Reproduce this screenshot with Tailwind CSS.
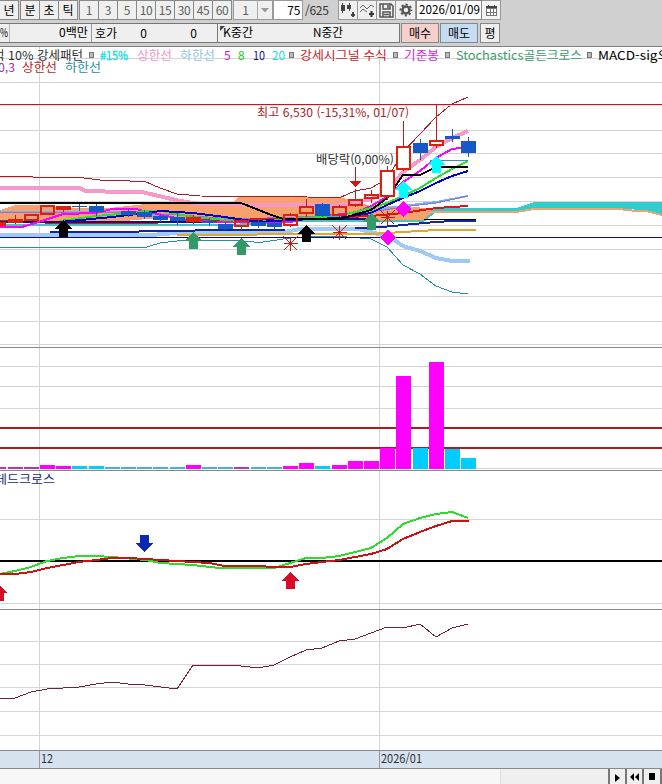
<!DOCTYPE html>
<html lang="ko">
    <head>
        <meta charset="utf-8">
        <title>Chart</title>
        <meta name="viewport" content="width=device-width, initial-scale=1">
        <script src="https://cdn.jsdelivr.net/npm/@tailwindcss/browser@4"></script>
    </head>
    <body class="w-[662px] h-[784px] overflow-hidden flex flex-col bg-white text-black text-[12px] leading-none font-['Noto_Sans_CJK_KR',sans-serif]">

        <header class="h-[47px] shrink-0 bg-[#d0d0d0] border-b border-[#808080] whitespace-nowrap">
            <!-- period bar -->
            <div class="flex h-5 text-[#606060]">
                <div class="flex text-black">
                    <div class="w-[19px] h-5 bg-[#efefef] border border-l-0 border-[#888] flex items-center justify-center">년</div>
                    <div class="ml-px w-5 h-5 bg-[#efefef] border border-[#888] flex items-center justify-center">분</div>
                    <div class="w-[19px] h-5 bg-[#efefef] border border-l-0 border-[#888] flex items-center justify-center">초</div>
                    <div class="w-[19px] h-5 bg-[#efefef] border border-l-0 border-[#888] flex items-center justify-center">틱</div>
                </div>
                <div class="flex ml-px tracking-tight">
                    <div class="w-5 h-5 bg-[#efefef] border border-[#888] flex items-center justify-center">1</div>
                    <div class="w-[19px] h-5 bg-[#efefef] border border-l-0 border-[#888] flex items-center justify-center">3</div>
                    <div class="w-[19px] h-5 bg-[#efefef] border border-l-0 border-[#888] flex items-center justify-center">5</div>
                    <div class="w-[19px] h-5 bg-[#efefef] border border-l-0 border-[#888] flex items-center justify-center">10</div>
                    <div class="w-[19px] h-5 bg-[#efefef] border border-l-0 border-[#888] flex items-center justify-center">15</div>
                    <div class="w-[19px] h-5 bg-[#efefef] border border-l-0 border-[#888] flex items-center justify-center">30</div>
                    <div class="w-[19px] h-5 bg-[#efefef] border border-l-0 border-[#888] flex items-center justify-center">45</div>
                    <div class="w-[19px] h-5 bg-[#efefef] border border-l-0 border-[#888] flex items-center justify-center">60</div>
                </div>
                <div class="flex ml-px w-10 h-5 bg-[#efefef] border border-[#999]">
                    <div class="w-6 border-r border-[#aaa] flex items-center justify-center">1</div>
                    <div class="flex-1 flex items-center justify-center">
                        <svg width="8" height="5" viewBox="0 0 8 5"><path d="M0 0h8L4 4.5z" fill="#999"/></svg>
                    </div>
                </div>
                <div class="w-[30px] h-5 bg-white border border-[#999] flex items-center justify-end pr-0.5 text-black tracking-tight">75</div>
                <div class="w-[35px] flex items-center pl-0.5 text-[#333] tracking-tight">/625</div>
                <div class="flex">
                    <div class="w-5 h-5 bg-[#efefef] border border-[#999] flex items-center justify-center">
                        <svg width="16" height="16" viewBox="0 0 16 16" shape-rendering="crispEdges" fill="#444"><path d="M1 3h4v6H1zM2 1h1v10H2zM7 3h4v4H7zM9 1h1v8H9zM12 10h2v5h-2zM11 12h4v2h-4z"/></svg>
                    </div>
                    <div class="w-[19px] h-5 bg-[#efefef] border border-l-0 border-[#999] flex items-center justify-center">
                        <svg width="16" height="16" viewBox="0 0 16 16" fill="none" stroke="#666"><path d="M1 6l3-3 4 4 4-4 3 2M1 10l3-3 4 3"/><path d="M12.500 9v6M10 12h5" stroke="#333" stroke-width="2"/></svg>
                    </div>
                    <div class="w-[19px] h-5 bg-[#efefef] border border-l-0 border-[#999] flex items-center justify-center">
                        <svg width="15" height="15" viewBox="0 0 15 15" fill="none" stroke="#555" stroke-width="1.500"><path d="M1 1h11l2 2v11H1zM4 1v5h7V1M4 14V9h7v5M5 11.500h5M9 2v3"/></svg>
                    </div>
                    <div class="w-5 h-5 bg-[#efefef] border border-l-0 border-[#999] flex items-center justify-center">
                        <svg width="14" height="14" viewBox="-7 -7 14 14" fill="none" stroke="#555"><circle r="3.500" stroke-width="2.500"/><circle r="5.400" stroke-width="2" stroke-dasharray="2.200 2.040" stroke-dashoffset="1.100"/></svg>
                    </div>
                </div>
                <div class="w-[66px] h-5 bg-white border border-[#888] flex items-center text-black">
                    <svg width="64" height="18"><text x="2" y="13" textLength="61" lengthAdjust="spacingAndGlyphs">2026/01/09</text></svg>
                </div>
                <div class="w-[19px] h-5 bg-[#f4f4f4] border border-l-0 border-[#999] flex items-center justify-center">
                    <svg width="11" height="11" viewBox="0 0 11 11" shape-rendering="crispEdges"><path d="M0 1h11v10H0z" fill="#777"/><path d="M0 1h11v2H0zM2 0h1v2H2zM8 0h1v2H8z" fill="#444"/><path d="M1 4h3v3H1zM5 4h2v3H5zM8 4h2v3H8zM1 8h3v2H1zM5 8h2v2H5zM8 8h2v2H8z" fill="#fff"/></svg>
                </div>
            </div>

            <!-- quote bar -->
            <div class="flex h-5 mt-[3px]">
                <div class="w-[217px] h-5 bg-[#efefef] border-y border-[#777] flex items-center">
                    <div class="w-[10px] h-full border-r border-[#bbb] flex items-center"><svg width="9" height="18"><text x="0" y="13" textLength="8" lengthAdjust="spacingAndGlyphs">%</text></svg></div>
                    <div class="w-[82px] h-full border-r border-[#999] flex items-center justify-end pr-0.5"><svg width="31" height="18"><text x="1" y="13" textLength="29" lengthAdjust="spacingAndGlyphs">0백만</text></svg></div>
                    <div class="w-7 pl-[3px]">호가</div>
                    <div class="w-[27px] text-right">0</div>
                    <div class="w-[50px] text-right">0</div>
                </div>
                <div class="w-[183px] h-5 bg-[#efefef] border border-[#777] flex items-center relative">
                    <svg class="absolute left-0.5 top-0.5" width="5" height="5"><path d="M0 0h5L0 5z" fill="#444"/></svg>
                    <svg width="180" height="18"><text x="5" y="13" textLength="30" lengthAdjust="spacingAndGlyphs">K중간</text><text x="95" y="13" textLength="30" lengthAdjust="spacingAndGlyphs">N중간</text></svg>
                </div>
                <div class="ml-px w-[38px] h-5 bg-[#f4cfcb] border border-[#888] flex items-center justify-center">매수</div>
                <div class="ml-px w-[38px] h-5 bg-[#c5dcf3] border border-[#888] flex items-center justify-center">매도</div>
                <div class="ml-0.5 w-5 h-5 bg-[#efefef] border border-[#888] flex items-center justify-center">평</div>
            </div>
        </header>

        <!-- chart, y runs from 47 to 750 -->
        <svg class="block shrink-0" width="662" height="703" viewBox="0 47 662 703" shape-rendering="crispEdges" fill="none">
            <g id="grid" stroke="#d4d4d4"></g>
            <path d="M0 347.500H662M0 470.500H662M0 609.500H662" stroke="#888"/>

            <!-- cloud -->
            <path d="M0 210L15 205H42L60 208H110L145 204L160 203H232L238 197H340L371 206H400L440 209H470V212H435L424 220H300L240 219L160 218L100 223H0z" fill="#f8a16c"/>
            <path d="M0 224.500H240L300 220.500H424L436 210.500H470" stroke="#4cc0bd" stroke-width="2"/>
            <path d="M436 208H516L535 202H662V215L646 211L630 209H560L540 208L516 211H430z" fill="#33cccc"/>
            <path d="M428 212H516L534 209H552L566 208.500H614L632 210.500L646 211L662 215" stroke="#e8a676" stroke-width="2"/>

            <!-- bands -->
            <path d="M0 188H80L85 191L144 192.500L180 201L200 204L280 205H340L371 199L387 192L403 172L420 160L436 147L452 138L468 131" stroke="#f799c8" stroke-width="4"/>
            <path d="M0 235H150L177 233H280L300 229H358L371 232L390 237L403 246L420 251L436 258L452 261H470" stroke="#a0caf5" stroke-width="4"/>
            <path d="M0 176.500H25L50 178L80 177.500L100 180L145 181.500L160 188L177 194L200 196L307 197L340 197.500L355 191L371 188L387 179L403 152L420 134L436 117L452 104L468 97" stroke="#a91c22"/>
            <path d="M0 247.500H88L104 247.500L145 247.500L160 243L177 241L209 240L241 241L260 242.500L290 238L330 236L355 237.500L371 239L387 247L403 265L420 274L436 286L452 292L468 294" stroke="#27919b"/>
            <path d="M0 237.500H662" stroke="#0a0a78"/>
            <path d="M177 235H225L290 234H339L371 234L403 232L436 230H476" stroke="#e0a828" stroke-width="2"/>
            <path d="M50 232H128L150 231H180L210 230H285M355 228H371L403 225L436 222L452 221H476" stroke="#12279a" stroke-width="2"/>
            <path d="M424 219.500H476" stroke="#000"/>

            <!-- moving averages -->
            <path d="M0 211.500H130L180 219L240 222L290 221L340 214L371 211L403 206L436 202L468 196" stroke="#6ab8ee" stroke-width="2"/>
            <path d="M0 212.500H60L145 213L240 219L322 216L371 212L403 207L436 203L468 196" stroke="#a06adf"/>
            <path d="M0 221L60 223H150L200 220L300 219L371 216L403 213L436 208L468 206" stroke="#d81818" stroke-width="2"/>
            <path d="M0 222H240L290 219H371" stroke="#12127c" stroke-width="2"/>
            <path d="M0 227H22L42 221L63 214L96 213L112 209H136L161 215L193 221L225 222L241 222L290 222L322 216L355 213L371 206L387 197L403 182L420 171L436 158L452 149L468 147" stroke="#f0f" stroke-width="2"/>
            <path d="M60 221L96 216L120 214L145 211H161L193 217L225 220L258 222L290 219L339 216L371 208L387 203L403 196L420 188L436 178L452 169L468 161" stroke="#2be02b" stroke-width="2"/>
            <path d="M60 222L112 217L145 213L161 211L193 213L225 217L258 222L290 220L339 218L371 213L387 205L403 198L420 191L436 183L452 176L468 171" stroke="#0000c8" stroke-width="2"/>
            <path d="M0 203H241L274 216L284 219H340L371 210L387 198L403 175H420L436 167H468" stroke="#000" stroke-width="2"/>
            <path d="M430 160.500H468" stroke="#2c9c9c"/>

            <!-- high price -->
            <path d="M0 104.500H662" stroke="#b11f24"/>
            <path d="M0 105.500H662" stroke="#fad0d0"/>

            <g id="candles"></g>

            <!-- signals -->
            <g id="signals"></g>
            <path d="M355.500 167V182" stroke="#c01818"/>
            <path d="M350 181H361L355.500 187z" fill="#e01010"/>

            <!-- volume -->
            <path d="M0 428H662M0 448H662" stroke="#b5191c" stroke-width="2"/>
            <g id="volume"></g>

            <!-- MACD -->
            <path d="M0 561H662" stroke="#000" stroke-width="2"/>
            <path d="M0 574L15 571L31 567L47 561L63 558L79 556H96L112 557L145 560L161 563L193 565L219 568H274L290 563L306 558H322L339 556L371 548L387 538L403 524L420 518L436 514L452 512L468 518" stroke="#2bdc2b" stroke-width="2"/>
            <path d="M0 574H15L31 572L47 568L63 565L79 562L96 560L112 558H128L145 559L177 561L209 563L225 566H258L274 567H290L306 564L322 562L339 560L371 554L387 549L403 539L420 532L436 526L452 521H469" stroke="#d01010" stroke-width="2"/>
            <path d="M140 535H149V543H153L144.500 552L136 543H140z" fill="#0a28b0"/>

            <path d="M0 699L15 698L31 692L47 689L79 687L96 684L112 682L128 684L145 685L177 689L193 665L209 666L225 665L241 666L258 668L274 665L290 657L306 650L322 648L339 641L355 639L371 633L387 627L403 628L420 624L436 637L452 628L468 624" stroke="#6f2337"/>

            <!-- labels -->
            <g font-size="12" fill="#303030" shape-rendering="auto">
                <text x="-7" y="60" textLength="90" lengthAdjust="spacingAndGlyphs">벅 10% 강세패턴</text>
                <text x="100" y="60" textLength="28" lengthAdjust="spacingAndGlyphs" fill="#18dfe8" stroke="#18dfe8" stroke-width=".4">#15%</text>
                <text x="137" y="60" textLength="35" lengthAdjust="spacingAndGlyphs" fill="#f095c4">상한선</text>
                <text x="180" y="60" textLength="35" lengthAdjust="spacingAndGlyphs" fill="#92c2ee">하한선</text>
                <text x="224" y="60" fill="#d414d8">5</text>
                <text x="238" y="60" fill="#20cc20">8</text>
                <text x="253" y="60" textLength="12" lengthAdjust="spacingAndGlyphs" fill="#1010a8">10</text>
                <text x="272" y="60" textLength="13" lengthAdjust="spacingAndGlyphs" fill="#18d8e0">20</text>
                <text x="300" y="60" textLength="87" lengthAdjust="spacingAndGlyphs" fill="#c81c1c">강세시그널 수식</text>
                <text x="404" y="60" textLength="35" lengthAdjust="spacingAndGlyphs" fill="#d81cdc">기준봉</text>
                <text x="456" y="60" textLength="126" lengthAdjust="spacingAndGlyphs" fill="#3a9c6c">Stochastics골든크로스</text>
                <text x="598" y="60" textLength="72" lengthAdjust="spacingAndGlyphs" fill="#000">MACD-sig오</text>
                <text x="-2" y="72" textLength="17" lengthAdjust="spacingAndGlyphs" fill="#a52cb8">0,3</text>
                <text x="22" y="72" textLength="35" lengthAdjust="spacingAndGlyphs" fill="#b81c20">상한선</text>
                <text x="65" y="72" textLength="36" lengthAdjust="spacingAndGlyphs" fill="#27919b">하한선</text>
                <text x="257" y="117" textLength="152" lengthAdjust="spacingAndGlyphs" fill="#a91c28">최고 6,530 (-15,31%, 01/07)</text>
                <text x="316" y="164" textLength="78" lengthAdjust="spacingAndGlyphs">배당락(0,00%)</text>
                <text x="-5" y="484" textLength="60" lengthAdjust="spacingAndGlyphs" fill="#14287c">데드크로스</text>
            </g>
            <path d="M89.500 52.500h4v5h-4zM289.500 52.500h4v5h-4zM393.500 52.500h4v5h-4zM445.500 52.500h4v5h-4zM587.500 52.500h4v5h-4z" fill="#bbb" stroke="#777"/>
        </svg>

        <footer class="flex flex-col flex-1">
            <div class="h-[19px] bg-[#d6e2ef] border-y border-[#888] text-[#333] flex">
                <svg width="662" height="17"><text x="41" y="12" textLength="12" lengthAdjust="spacingAndGlyphs" fill="#333">12</text><text x="381" y="12" textLength="41" lengthAdjust="spacingAndGlyphs" fill="#333">2026/01</text><path d="M39.500 0V17M379.500 0V17" stroke="#999"/></svg>
            </div>
            <div class="flex flex-1">
                <div class="w-[500px] bg-[#f7f7f7]"></div>
                <div class="w-[110px] bg-[#efefef] border-l border-[#ddd] border-r-2 border-r-[#777]"></div>
                <div class="w-[17px] bg-[#efefef] border-r-2 border-r-[#777] flex items-center justify-center pt-0.5"><svg width="5" height="8"><path d="M0 0l5 4l-5 4z"/></svg></div>
                <div class="w-[17px] bg-[#efefef] border-r-2 border-[#777] flex items-center justify-center"><svg width="9" height="8"><path d="M4 0v8L0 4zM9 0v8L5 4z"/></svg></div>
                <div class="w-[18px] bg-[#efefef] border-r-2 border-[#777] flex items-center justify-center"><svg width="6" height="7"><path d="M0 0h6v7H0z"/></svg></div>
            </div>
        </footer>

        <script>
            const NS = "http://www.w3.org/2000/svg";

            function add(id, tag, attrs){
                const el = document.createElementNS(NS, tag);
                for(const key in attrs) el.setAttribute(key, attrs[key]);
                document.getElementById(id).appendChild(el);
            }

            // grid
            const rows = [58, 82, 130, 153, 177, 201, 225, 249, 273, 296, 321, 344, 366, 386, 408, 468, 519, 603, 641, 664, 687, 711, 735];
            rows.forEach((y) => add("grid", "path", { d: `M0 ${y + .5}H662` }));
            [39, 379].forEach((x) => add("grid", "path", { d: `M${x + .5} 47V750` }));

            // x, top, bottom, high, low, type (h = hollow, r = red, b = blue)
            const candles = [
                [-2, 222, 226, 222, 226, "r"], [15, 219, 223, 215, 224, "r"], [31, 214, 220, 214, 221, "h"],
                [47, 205, 214, 205, 215, "h"], [63, 206, 210, 206, 212, "r"], [79, 206, 207, 204, 211, "b"],
                [96, 206, 212, 204, 216, "b"], [128, 211, 215, 209, 217, "b"], [144, 212, 217, 210, 219, "b"],
                [160, 216, 220, 214, 222, "b"], [177, 217, 221, 213, 225, "b"], [193, 217, 222, 215, 224, "r"],
                [209, 221, 223, 218, 226, "b"], [225, 224, 229, 222, 230, "b"], [241, 220, 226, 219, 230, "h"],
                [258, 222, 226, 220, 228, "b"], [274, 223, 227, 221, 229, "b"], [290, 214, 225, 213, 227, "h"],
                [306, 206, 213, 199, 217, "h"], [322, 204, 216, 203, 217, "b"], [339, 206, 215, 205, 217, "h"],
                [355, 199, 205, 189, 207, "h"], [371, 194, 198, 190, 203, "h"], [387, 170, 196, 166, 200, "h"],
                [403, 146, 169, 121, 171, "h"], [420, 143, 153, 139, 160, "b"], [436, 140, 145, 104, 148, "h"],
                [452, 136, 139, 129, 142, "b"], [468, 141, 153, 137, 157, "b"],
            ];
            candles.forEach(([x, top, bottom, high, low, type]) => {
                const color = type === "b" ? "#1558c8" : "#dc2010";
                add("candles", "path", { d: `M${x + .5} ${high}V${top}M${x + .5} ${bottom}V${low}`, stroke: type === "b" ? color : "#b82020" });
                if(type === "h"){
                    add("candles", "rect", { x: x - 6, y: top + 1, width: 13, height: bottom - top - 1, stroke: color, "stroke-width": 2, fill: x > 380 ? "#fff" : "none" });
                } else{
                    add("candles", "rect", { x: x - 7, y: top, width: 15, height: bottom - top, fill: color });
                }
            });

            // arrows, tip at x, y
            const arrows = [
                [63.5, 220, "#000"], [306.5, 225, "#000"], [193.5, 232, "#339966"], [241.5, 238, "#339966"],
                [371.5, 213, "#339966"], [403.5, 181, "#00ffff"], [436.5, 156, "#00ffff"],
                [290.5, 572, "#d80a28"], [-1, 584, "#d80a28"],
            ];
            arrows.forEach(([x, y, fill]) => add("signals", "path", { d: `M${x} ${y}l8.500 9h-4v8h-9v-8h-4z`, fill }));
            [[403.5, 209], [387.5, 237.5]].forEach(([x, y]) => add("signals", "path", { d: `M${x} ${y - 8}l8 8l-8 8l-8 -8z`, fill: "#ff00ff" }));
            [[290.5, 243.5], [339.5, 232.5], [387.5, 217.5]].forEach(([x, y]) => add("signals", "path", { d: `M${x - 7} ${y}h14M${x} ${y - 7}v14M${x - 7} ${y - 7}l14 14M${x + 7} ${y - 7}l-14 14`, stroke: "#d01818" }));

            // x, top, up
            const volume = [
                [-2, 467, 1], [15, 467, 1], [31, 467, 1], [47, 465, 1], [63, 466, 1], [79, 466, 0], [96, 466, 0],
                [112, 467, 0], [128, 467, 0], [144, 467, 0], [160, 467, 0], [177, 467, 0], [193, 465, 1], [209, 467, 0],
                [225, 467, 0], [241, 467, 1], [258, 467, 0], [274, 467, 0], [290, 466, 1], [306, 463, 1], [322, 466, 0],
                [339, 465, 1], [355, 461, 1], [371, 461, 1], [387, 448, 1], [403, 376, 1], [420, 448, 0], [436, 362, 1],
                [452, 449, 0], [468, 458, 0],
            ];
            volume.forEach(([x, y, up]) => {
                let fill = up ? "#ff00ff" : "#00ccff";
                if(y === 467) fill = up ? "#b535b5" : "#45b5d5";
                add("volume", "rect", { x: x - 7, y, width: 15, height: 469 - y, fill });
            });
        </script>
    </body>
</html>
